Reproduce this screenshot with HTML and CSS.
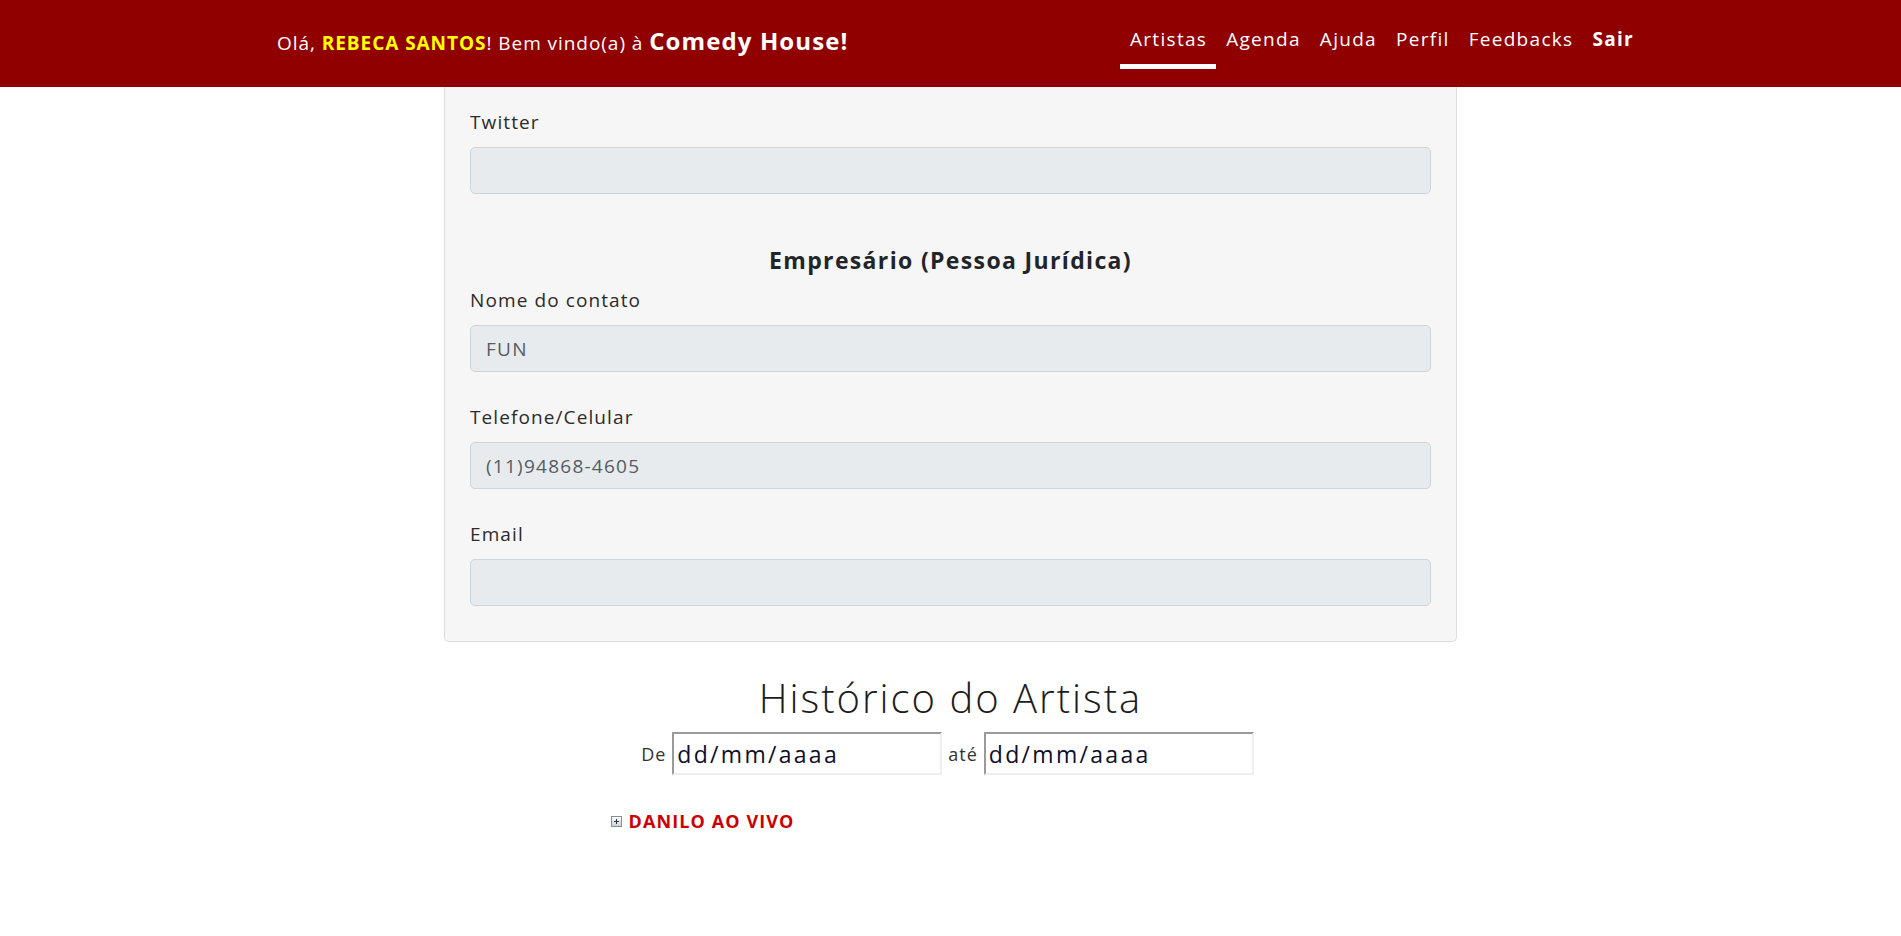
FILE: index.html
```html
<!DOCTYPE html>
<html lang="pt-BR">
<head>
<meta charset="utf-8">
<title>Comedy House</title>
<link rel="stylesheet" href="styles.css">
</head>
<body>
<header class="topbar">
  <div class="welcome">Olá, <strong class="user">REBECA SANTOS</strong>! Bem vindo(a) à <strong class="brand">Comedy House!</strong></div>
  <nav class="menu">
    <a class="menu-link active" href="#">Artistas</a>
    <a class="menu-link" href="#">Agenda</a>
    <a class="menu-link" href="#">Ajuda</a>
    <a class="menu-link" href="#">Perfil</a>
    <a class="menu-link" href="#">Feedbacks</a>
    <a class="menu-link bold" href="#">Sair</a>
  </nav>
</header>

<main class="page">
  <section class="card">
    <div class="group">
      <label class="label">Twitter</label>
      <div class="field"></div>
    </div>

    <h5 class="section-title">Empresário (Pessoa Jurídica)</h5>
    <div class="group">
      <label class="label">Nome do contato</label>
      <div class="field">FUN</div>
    </div>
    <div class="group">
      <label class="label">Telefone/Celular</label>
      <div class="field">(11)94868-4605</div>
    </div>
    <div class="group last">
      <label class="label">Email</label>
      <div class="field"></div>
    </div>
  </section>

  <h2 class="history-title">Histórico do Artista</h2>
  <div class="date-row">
    <span class="date-label">De</span>
    <input class="date-input" type="text" value="dd/mm/aaaa" readonly>
    <span class="date-label">até</span>
    <input class="date-input" type="text" value="dd/mm/aaaa" readonly>
  </div>

  <div class="history-list">
    <div class="history-item">
      <svg class="plus-icon" width="11" height="11" viewBox="0 0 11 11">
        <defs>
          <linearGradient id="pg" x1="0" y1="0" x2="0" y2="1">
            <stop offset="0" stop-color="#ffffff"/>
            <stop offset="1" stop-color="#c9d1d9"/>
          </linearGradient>
        </defs>
        <rect x="0.5" y="0.5" width="10" height="10" fill="url(#pg)" stroke="#7f8e9c"/>
        <path d="M3 5.5H8M5.5 3V8" stroke="#333" stroke-width="1"/>
      </svg>
      <span class="item-name">DANILO AO VIVO</span>
    </div>
  </div>
</main>
</body>
</html>
```

FILE: styles.css
```css
html, body {
  margin: 0;
  padding: 0;
  background: #ffffff;
}

body {
  font-family: "Open Sans", "Liberation Sans", sans-serif;
  color: #212529;
}

.topbar {
  height: 87px;
  box-sizing: border-box;
  background: #910000;
  display: flex;
  justify-content: space-between;
  align-items: flex-start;
  padding: 0 258px 0 277px;
}

.welcome {
  padding-top: 26px;
  color: #ffffff;
  font-size: 19px;
  line-height: 30px;
  letter-spacing: 0.95px;
}

.user {
  color: #ffff00;
  font-weight: 700;
}

.brand {
  font-size: 24px;
  font-weight: 700;
  letter-spacing: 1.1px;
}

.menu {
  display: flex;
  padding-top: 24px;
}

.menu-link {
  display: block;
  padding: 0 9px 10px 10px;
  color: #ffffff;
  text-decoration: none;
  font-size: 19px;
  line-height: 30px;
  letter-spacing: 1.3px;
  border-bottom: 5px solid transparent;
}

.menu-link.active {
  border-bottom-color: #ffffff;
}

.menu-link.bold {
  font-weight: 700;
}

.page {
  display: flex;
  flex-direction: column;
  align-items: center;
}

.card {
  width: 1013px;
  box-sizing: border-box;
  background: #f6f6f6;
  border: 1px solid #dcdcdc;
  border-top: none;
  border-radius: 0 0 5px 5px;
  padding: 20px 25px 25px 25px;
}

.group {
  margin-bottom: 30px;
}

.group.last {
  margin-bottom: 10px;
}

.label {
  display: block;
  font-size: 19px;
  line-height: 30px;
  margin-bottom: 10px;
  color: #2b2b2b;
  letter-spacing: 1.1px;
}

.field {
  height: 47px;
  box-sizing: border-box;
  background: #e8ebee;
  border: 1px solid #ced4da;
  border-radius: 5px;
  padding: 0 15px;
  display: flex;
  align-items: center;
  font-size: 19px;
  color: #555c63;
  letter-spacing: 1.25px;
}

.section-title {
  margin: 51px 0 10px 0;
  text-align: center;
  font-size: 23px;
  line-height: 30px;
  font-weight: 700;
  color: #212529;
  letter-spacing: 1.35px;
}

.history-title {
  margin: 38px 0 16px 0;
  font-size: 40px;
  line-height: 36px;
  font-weight: 300;
  color: #1c1c1c;
  letter-spacing: 2px;
}

.date-row {
  display: flex;
  align-items: center;
  gap: 6px;
  margin-left: -6px;
}

.date-label {
  font-size: 18px;
  color: #333333;
  letter-spacing: 1px;
}

.date-input {
  width: 270px;
  height: 43px;
  box-sizing: border-box;
  margin: 0;
  padding: 0 3px;
  border-style: solid;
  border-width: 2px;
  border-color: #9a9a9a #eeeeee #eeeeee #9a9a9a;
  background: #ffffff;
  font-family: "Open Sans", "Liberation Sans", sans-serif;
  font-size: 23px;
  color: #0e0e2a;
  letter-spacing: 2.3px;
  outline: none;
}

.history-list {
  width: 680px;
  margin-top: 34px;
}

.history-item {
  display: flex;
  align-items: center;
  gap: 7px;
}

.plus-icon {
  flex: none;
}

.item-name {
  color: #cc0000;
  font-size: 18px;
  font-weight: 700;
  letter-spacing: 1.1px;
}
```
